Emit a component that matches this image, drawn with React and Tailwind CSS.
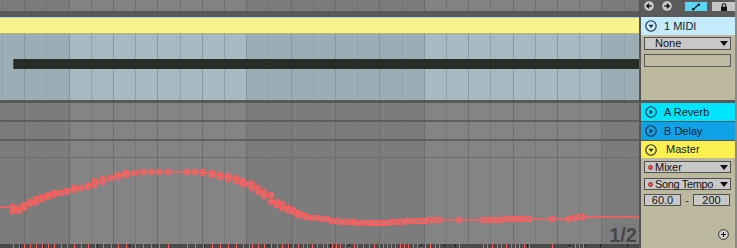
import React from "react";

const GRID_X = Array.from({ length: 29 }, (_, k) => Math.round(2 + 22.2 * k));
const SHADE = [
  [0, 69],
  [246, 424],
  [601, 639],
];

const PTS = [
  [13, 207], [13, 211], [19, 208], [19, 211], [24, 205], [24, 208], [30, 202], [30, 204],
  [36, 199], [36, 202], [42, 197], [42, 199], [48, 195], [48, 197], [54, 193], [54, 195],
  [61, 193], [67, 191], [67, 192], [74, 188], [74, 190], [81, 188], [88, 186], [88, 187],
  [95, 181], [95, 185], [103, 179], [103, 182], [111, 178], [118, 175], [118, 177],
  [126, 173], [126, 175], [135, 173], [143, 172], [151, 172], [159, 172], [168, 172],
  [187, 172], [195, 172], [203, 172], [203, 173], [212, 173], [212, 175], [220, 175],
  [220, 177], [228, 176], [228, 179], [236, 178], [236, 181], [243, 181], [243, 184],
  [249, 184], [252, 184], [252, 188], [258, 188], [258, 192], [264, 192], [264, 196],
  [271, 195], [271, 202], [277, 202], [277, 205], [282, 204], [282, 208], [288, 208],
  [288, 210], [293, 210], [293, 212], [298, 213], [298, 215], [303, 215], [303, 216],
  [307, 217], [312, 218], [317, 218], [323, 219], [327, 219], [332, 221], [336, 221],
  [340, 222], [345, 222], [349, 222], [354, 222], [357, 223], [363, 223], [369, 223],
  [374, 223], [379, 223], [383, 223], [387, 223], [391, 222], [395, 222], [400, 222],
  [404, 222], [408, 221], [413, 221], [417, 221], [421, 221], [425, 221], [430, 220],
  [435, 220], [439, 220], [459, 220], [483, 220], [487, 220], [492, 220], [497, 220],
  [501, 220], [506, 219], [511, 219], [515, 219], [519, 219], [524, 219], [529, 219],
  [552, 219], [569, 219], [575, 218], [579, 217], [583, 217],
];
const LINE = [[0, 207], ...PTS, [639, 217]];
const TICK_X = [...new Set(PTS.map((p) => p[0]))];
const BLACK_TICKS = [20, 43, 97, 129, 204, 268, 289, 330, 349, 421, 444, 455, 527, 569, 585, 600, 627];

function Grid({ light, dark, line, lineDark }) {
  return (
    <svg className="absolute inset-0" width="639" height="100%">
      <rect x="0" y="0" width="639" height="100%" fill={light} />
      {SHADE.map(([a, b]) => (
        <rect key={a} x={a} y="0" width={b - a} height="100%" fill={dark} />
      ))}
      {GRID_X.map((x, k) => (
        <rect key={x} x={x} y="0" width="1" height="100%" fill={k % 2 ? lineDark : line} />
      ))}
    </svg>
  );
}

function ToggleIcon({ open }) {
  return (
    <svg width="12" height="12" viewBox="0 0 12 12" className="shrink-0">
      <circle cx="6" cy="6" r="5.2" fill="none" stroke="#1b2838" strokeWidth="1.1" />
      {open ? (
        <path d="M3.5 4.7h5L6 7.9z" fill="#1b2838" />
      ) : (
        <path d="M4.7 3.5v5L7.9 6z" fill="#1b2838" />
      )}
    </svg>
  );
}

function Header({ className, label, open, textClass }) {
  return (
    <div className={`flex items-center pl-[4px] ${className}`}>
      <ToggleIcon open={open} />
      <span className={`text-[11px] leading-none text-[#121d28] ${textClass}`}>{label}</span>
    </div>
  );
}

function Arrow() {
  return (
    <svg width="8" height="5" viewBox="0 0 8 5" className="ml-auto mr-[2px] shrink-0">
      <path d="M0 0h8L4 5z" fill="#111" />
    </svg>
  );
}

function Dropdown({ label, dot, className, labelClass = "" }) {
  return (
    <div className={`ml-[3px] mr-[4px] flex items-center border border-[#505050] bg-[#c8c8c8] ${className}`}>
      {dot ? (
        <span className="ml-[3px] mr-[2px] size-[5px] shrink-0 rounded-full border-[0.5px] border-[#9a2a2a] bg-[#ff4b4b]" />
      ) : (
        <span className="w-[10px] shrink-0" />
      )}
      <span className={`whitespace-nowrap text-[11px] leading-none text-[#111] ${labelClass}`}>{label}</span>
      <Arrow />
    </div>
  );
}

function CircleArrow({ dir }) {
  return (
    <svg width="10" height="10" viewBox="0 0 10 10" className="shrink-0">
      <circle cx="5" cy="5" r="4.8" fill="#c9c9c9" />
      {dir === "left" ? (
        <path d="M7.5 5H3M5 2.8L2.8 5L5 7.2" stroke="#111" strokeWidth="1.3" fill="none" />
      ) : (
        <path d="M2.5 5H7M5 2.8L7.2 5L5 7.2" stroke="#111" strokeWidth="1.3" fill="none" />
      )}
    </svg>
  );
}

export default function App() {
  return (
    <div className="flex h-[248px] w-[737px] overflow-hidden bg-[#595959] font-['Liberation_Sans',Arial,sans-serif]">
      {/* Arrangement area */}
      <div className="flex w-[639px] shrink-0 flex-col">
        <div className="relative h-[11px]">
          <Grid light="#828282" dark="#7b7b7b" line="#707070" lineDark="#6a6a6a" />
        </div>
        <div className="h-[6px] bg-[#595959]" />
        <div className="h-px bg-[#a9d8ea]" />
        <div className="h-[16px] border-b border-[#bdb46c] bg-[#f9f38b]" />
        <div className="relative h-[66px]">
          <Grid light="#a7bac2" dark="#9badb5" line="#8fa1a9" lineDark="#8497a0" />
          <div className="relative pl-[13px] pt-[25px]">
            <div className="h-[10px] border-l border-[#4a4d48] bg-[#2a2c27]" />
          </div>
        </div>
        <div className="h-[3px] bg-[#595959]" />
        <div className="relative h-[17px]">
          <Grid light="#848484" dark="#7c7c7c" line="#777777" lineDark="#6d6d6d" />
        </div>
        <div className="h-[2px] bg-[#5e5e5e]" />
        <div className="relative h-[17px]">
          <Grid light="#848484" dark="#7c7c7c" line="#777777" lineDark="#6d6d6d" />
        </div>
        <div className="h-[2px] bg-[#5e5e5e]" />
        <div className="relative h-[103px]">
          <Grid light="#848484" dark="#7c7c7c" line="#777777" lineDark="#6d6d6d" />
          <svg className="absolute inset-0" width="639" height="103">
            <rect x="0" y="16" width="639" height="1" fill="#6d6d6d" />
            <polyline
              points={LINE.map(([x, y]) => `${x},${y - 141}`).join(" ")}
              fill="none"
              stroke="#ff5c5c"
              strokeWidth="1.6"
              strokeLinejoin="round"
            />
            {PTS.map(([x, y], i) => (
              <rect
                key={i}
                x={x - 2}
                y={y - 141 - 2}
                width="4"
                height="4"
                rx="1"
                fill="#8c8c8c"
                stroke="#ff5c5c"
                strokeWidth="2"
              />
            ))}
          </svg>
          <span className="absolute right-[2px] top-[84px] text-[20px] font-bold leading-none text-[#474747]">
            1/2
          </span>
        </div>
        <div className="relative h-[4px] bg-[#4a4a4a]">
          <svg className="absolute inset-0" width="639" height="4">
            {TICK_X.map((x) => (
              <rect key={x} x={x} y="0" width="1" height="4" fill="#ff5c5c" />
            ))}
            {BLACK_TICKS.map((x) => (
              <rect key={x} x={x} y="0" width="1" height="3" fill="#1c1c1c" />
            ))}
          </svg>
        </div>
      </div>

      {/* Divider */}
      <div className="w-[2px] shrink-0 bg-[#555555]" />

      {/* Right panel */}
      <div className="flex w-[94px] shrink-0 flex-col">
        <div className="flex h-[17px] items-start bg-[#5a5a5a] pt-[1px]">
          <span className="ml-[3px]">
            <CircleArrow dir="left" />
          </span>
          <span className="ml-[8px]">
            <CircleArrow dir="right" />
          </span>
          <div className="ml-[13px] mt-[1px] flex h-[9px] w-[22px] items-center justify-center bg-[#5bd5f7]">
            <svg width="10" height="8" viewBox="0 0 10 8">
              <path d="M2.5 6.2L7.5 1.8" stroke="#111" strokeWidth="1.2" />
              <rect x="1" y="5.2" width="2.2" height="2.2" fill="#111" />
              <rect x="6.8" y="0.6" width="2.2" height="2.2" fill="#111" />
            </svg>
          </div>
          <div className="ml-[5px] mt-[1px] flex h-[9px] w-[23px] items-center justify-center bg-[#c6c6c6]">
            <svg width="8" height="8" viewBox="0 0 8 8">
              <path d="M2.2 4V2.6a1.8 1.8 0 0 1 3.6 0V4" stroke="#111" strokeWidth="1.1" fill="none" />
              <rect x="1" y="3.8" width="6" height="4.2" fill="#111" />
            </svg>
          </div>
        </div>

        <Header className="h-[18px] bg-[#c4ecfd]" label="1 MIDI" open textClass="ml-[7px]" />

        <div className="flex h-[65px] flex-col bg-[#bdb99f] pt-[2px]">
          <Dropdown label="None" className="h-[13px]" />
          <div className="ml-[3px] mr-[4px] mt-[4px] h-[13px] border border-[#5a5a5a] bg-[#bfbba2]" />
        </div>

        <div className="h-[3px] bg-[#595959]" />
        <Header className="h-[18px] bg-[#00e5ff]" label="A Reverb" textClass="ml-[7px]" />
        <div className="h-px bg-[#555555]" />
        <Header className="h-[18px] bg-[#10a2e6]" label="B Delay" textClass="ml-[7px]" />
        <div className="h-px bg-[#555555]" />
        <Header className="h-[17px] bg-[#fdf152]" label="Master" open textClass="ml-[9px]" />

        <div className="flex flex-1 flex-col bg-[#bdb99f] pt-[3px]">
          <Dropdown label="Mixer" dot className="h-[12px]" />
          <Dropdown label="Song Tempo" dot className="mt-[5px] h-[12px]" labelClass="tracking-[-0.35px]" />
          <div className="ml-[3px] mt-[4px] flex h-[12px] items-center">
            <div className="flex h-full w-[37px] items-center justify-center border border-[#505050] bg-[#c8c8c8] text-[11px] leading-none text-[#111]">
              60.0
            </div>
            <div className="flex w-[12px] justify-center text-[11px] leading-none text-[#333]">-</div>
            <div className="flex h-full w-[37px] items-center justify-center border border-[#505050] bg-[#c8c8c8] text-[11px] leading-none text-[#111]">
              200
            </div>
          </div>
          <div className="mb-[8px] ml-auto mr-[6px] mt-auto">
            <svg width="11" height="11" viewBox="0 0 11 11">
              <circle cx="5.5" cy="5.5" r="4.9" fill="#d2d2d2" stroke="#2a2a2a" strokeWidth="1" />
              <path d="M5.5 3v5M3 5.5h5" stroke="#111" strokeWidth="1.1" />
            </svg>
          </div>
        </div>
      </div>

      <div className="w-[2px] shrink-0 bg-[#8a8a8a]" />
    </div>
  );
}
